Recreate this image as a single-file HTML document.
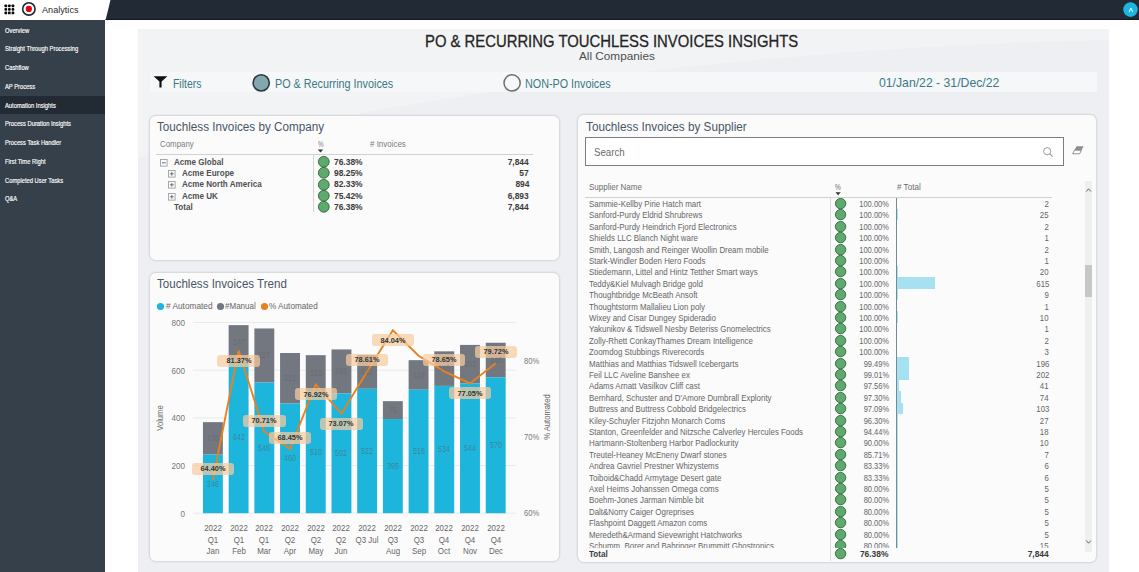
<!DOCTYPE html><html><head><meta charset="utf-8"><title>PO &amp; Recurring Touchless Invoices Insights</title><style>html,body{margin:0;padding:0;width:1139px;height:572px;overflow:hidden;background:#fff;position:relative}.t{position:absolute;white-space:nowrap;font-family:"Liberation Sans",sans-serif}</style></head><body>
<div style="position:absolute;left:0.00px;top:0.00px;width:1139.00px;height:20.00px;background:#ffffff;"></div>
<div style="position:absolute;left:0.00px;top:20.00px;width:105.00px;height:552.00px;background:#36404a;"></div>
<svg style="position:absolute;left:137.5px;top:29px" width="971.5" height="543" viewBox="137.5 29 971.5 543"><rect x="137.5" y="29" width="971.5" height="543" fill="#eeeff2"/><path d="M1110 40.0 L1090 40.4 L1070 40.9 L1050 41.5 L1030 42.2 L1010 43.0 L990 43.9 L970 44.8 L950 45.8 L930 46.9 L910 48.1 L890 49.4 L870 50.7 L850 52.1 L830 53.7 L810 55.3 L790 56.9 L770 58.7 L750 60.6 L730 62.5 L710 64.5 L690 66.6 L670 68.8 L650 71.1 L630 73.4 L610 75.8 L590 78.4 L570 81.0 L550 83.6 L530 86.4 L510 89.2 L490 92.2 L470 95.2 L450 98.3 L430 101.5 L410 104.7 L390 108.1 L370 111.5 L350 115.0 L330 118.6 L310 122.3 L290 126.1 L270 129.9 L250 133.8 L230 137.9 L210 142.0 L190 146.1 L170 150.4 L150 154.7 L137 157.6 L137 29 L1110 29 Z" fill="#f2f3f5"/></svg>
<svg style="position:absolute;left:0;top:0" width="1139" height="20"><polygon points="110.5,0 1139,0 1139,20 105.6,20" fill="#212a35"/><rect x="105.6" y="19" width="1034" height="1" fill="#111820"/></svg>
<div style="position:absolute;left:0.00px;top:95.50px;width:105.00px;height:18.50px;background:#222a33;"></div>
<div style="position:absolute;left:150.00px;top:72.00px;width:947.00px;height:20.40px;background:#f6f7f8;"></div>
<div style="position:absolute;left:149.3px;top:114.6px;width:411px;height:146px;box-sizing:border-box;background:#fbfbfc;border:1px solid #d9dadd;box-shadow:0 0 0 0.8px #e5e6e9;border-radius:7px"></div>
<div style="position:absolute;left:149.3px;top:272.4px;width:411px;height:289.2px;box-sizing:border-box;background:#fbfbfc;border:1px solid #d9dadd;box-shadow:0 0 0 0.8px #e5e6e9;border-radius:7px"></div>
<div style="position:absolute;left:577px;top:114.2px;width:520.2px;height:448.8px;box-sizing:border-box;background:#fbfbfc;border:1px solid #d9dadd;box-shadow:0 0 0 0.8px #e5e6e9;border-radius:7px"></div>
<svg style="position:absolute;left:0;top:0" width="40" height="20"><rect x="4.45" y="4.45" width="2.7" height="2.7" rx="0.9" fill="#0a0a0a"/><rect x="4.45" y="8.00" width="2.7" height="2.7" rx="0.9" fill="#0a0a0a"/><rect x="4.45" y="11.60" width="2.7" height="2.7" rx="0.9" fill="#0a0a0a"/><rect x="8.00" y="4.45" width="2.7" height="2.7" rx="0.9" fill="#0a0a0a"/><rect x="8.00" y="8.00" width="2.7" height="2.7" rx="0.9" fill="#0a0a0a"/><rect x="8.00" y="11.60" width="2.7" height="2.7" rx="0.9" fill="#0a0a0a"/><rect x="11.60" y="4.45" width="2.7" height="2.7" rx="0.9" fill="#0a0a0a"/><rect x="11.60" y="8.00" width="2.7" height="2.7" rx="0.9" fill="#0a0a0a"/><rect x="11.60" y="11.60" width="2.7" height="2.7" rx="0.9" fill="#0a0a0a"/><circle cx="28.85" cy="8.95" r="6.2" fill="#fff" stroke="#1d2530" stroke-width="1.6"/><circle cx="28.85" cy="8.95" r="3.1" fill="#e3000f"/></svg>
<svg style="position:absolute;left:1122px;top:0.6px" width="17" height="17"><circle cx="8.5" cy="8.6" r="7.3" fill="#1db6e0"/><path d="M7.1 11.1 L8.9 7.0 L10.7 11.1" fill="none" stroke="#e8f8fd" stroke-width="1"/></svg>
<svg style="position:absolute;left:152px;top:75px" width="18" height="14"><path d="M1.6 1.2 H15.4 L9.6 6.6 V12.6 H7.4 V6.6 Z" fill="#111"/></svg>
<svg style="position:absolute;left:251px;top:72.5px" width="20" height="20"><circle cx="10.2" cy="9.9" r="8.1" fill="#82a8ae" stroke="#2b383d" stroke-width="1.6"/></svg>
<svg style="position:absolute;left:501.5px;top:72.5px" width="20" height="20"><circle cx="10.1" cy="9.9" r="8.1" fill="none" stroke="#6e6e6e" stroke-width="1.5"/></svg>
<div style="position:absolute;left:156.40px;top:153.80px;width:376.40px;height:1.00px;background:#cfd1d3;"></div>
<div style="position:absolute;left:313.30px;top:155.00px;width:1.00px;height:57.00px;background:#d4d4d4;"></div>
<div style="position:absolute;left:585.2px;top:137.4px;width:478.4px;height:28.4px;box-sizing:border-box;background:#fff;border:1.4px solid #7d7d7d"></div>
<div style="position:absolute;left:585.40px;top:196.80px;width:467.10px;height:1.00px;background:#cfd1d3;"></div>
<div style="position:absolute;left:830.30px;top:197.50px;width:1.00px;height:363.00px;background:#dadada;"></div>
<div style="position:absolute;left:1085.20px;top:180.50px;width:6.90px;height:371.10px;background:#efefef;"></div>
<svg style="position:absolute;left:317px;top:149px" width="8" height="4"><path d="M0.8 0.4 H6.2 L3.5 3.4 Z" fill="#333"/></svg>
<svg style="position:absolute;left:316.80px;top:154.90px" width="13.60" height="13.60"><circle cx="6.80" cy="6.80" r="5.40" fill="#5ea96d" stroke="#2f6339" stroke-width="0.9"/></svg>
<svg style="position:absolute;left:160.30px;top:158.70px" width="8" height="8"><rect x="0.5" y="0.5" width="6.6" height="6.6" fill="none" stroke="#a0a0a0" stroke-width="0.9"/><path d="M1.9 3.8 H5.7" stroke="#707070" stroke-width="1"/></svg>
<svg style="position:absolute;left:316.80px;top:166.25px" width="13.60" height="13.60"><circle cx="6.80" cy="6.80" r="5.40" fill="#5ea96d" stroke="#2f6339" stroke-width="0.9"/></svg>
<svg style="position:absolute;left:168.00px;top:170.05px" width="8" height="8"><rect x="0.5" y="0.5" width="6.6" height="6.6" fill="none" stroke="#a0a0a0" stroke-width="0.9"/><path d="M1.9 3.8 H5.7" stroke="#707070" stroke-width="1"/><path d="M3.8 1.9 V5.7" stroke="#707070" stroke-width="1"/></svg>
<svg style="position:absolute;left:316.80px;top:177.60px" width="13.60" height="13.60"><circle cx="6.80" cy="6.80" r="5.40" fill="#5ea96d" stroke="#2f6339" stroke-width="0.9"/></svg>
<svg style="position:absolute;left:168.00px;top:181.40px" width="8" height="8"><rect x="0.5" y="0.5" width="6.6" height="6.6" fill="none" stroke="#a0a0a0" stroke-width="0.9"/><path d="M1.9 3.8 H5.7" stroke="#707070" stroke-width="1"/><path d="M3.8 1.9 V5.7" stroke="#707070" stroke-width="1"/></svg>
<svg style="position:absolute;left:316.80px;top:188.95px" width="13.60" height="13.60"><circle cx="6.80" cy="6.80" r="5.40" fill="#5ea96d" stroke="#2f6339" stroke-width="0.9"/></svg>
<svg style="position:absolute;left:168.00px;top:192.75px" width="8" height="8"><rect x="0.5" y="0.5" width="6.6" height="6.6" fill="none" stroke="#a0a0a0" stroke-width="0.9"/><path d="M1.9 3.8 H5.7" stroke="#707070" stroke-width="1"/><path d="M3.8 1.9 V5.7" stroke="#707070" stroke-width="1"/></svg>
<svg style="position:absolute;left:316.80px;top:200.30px" width="13.60" height="13.60"><circle cx="6.80" cy="6.80" r="5.40" fill="#5ea96d" stroke="#2f6339" stroke-width="0.9"/></svg>
<svg style="position:absolute;left:156.0px;top:301.5px" width="9" height="9"><circle cx="4.5" cy="4.5" r="3.6" fill="#1eb5dd"/></svg>
<svg style="position:absolute;left:216.0px;top:301.5px" width="9" height="9"><circle cx="4.5" cy="4.5" r="3.6" fill="#727780"/></svg>
<svg style="position:absolute;left:260.0px;top:301.5px" width="9" height="9"><circle cx="4.5" cy="4.5" r="3.6" fill="#e9811f"/></svg>
<svg style="position:absolute;left:0;top:0" width="1139" height="572"><rect x="193" y="512.70" width="323" height="1" fill="#e9eaeb"/><rect x="193" y="465.03" width="323" height="1" fill="#e9eaeb"/><rect x="193" y="417.35" width="323" height="1" fill="#e9eaeb"/><rect x="193" y="369.68" width="323" height="1" fill="#e9eaeb"/><rect x="193" y="322.00" width="323" height="1" fill="#e9eaeb"/><rect x="202.95" y="422.14" width="19.9" height="32.42" fill="#727780"/><rect x="202.95" y="454.56" width="19.9" height="58.64" fill="#1eb5dd"/><rect x="228.66" y="325.12" width="19.9" height="35.04" fill="#727780"/><rect x="228.66" y="360.16" width="19.9" height="153.04" fill="#1eb5dd"/><rect x="254.37" y="328.46" width="19.9" height="54.11" fill="#727780"/><rect x="254.37" y="382.57" width="19.9" height="130.63" fill="#1eb5dd"/><rect x="280.08" y="353.01" width="19.9" height="50.54" fill="#727780"/><rect x="280.08" y="403.55" width="19.9" height="109.65" fill="#1eb5dd"/><rect x="305.79" y="355.16" width="19.9" height="36.47" fill="#727780"/><rect x="305.79" y="391.63" width="19.9" height="121.57" fill="#1eb5dd"/><rect x="331.50" y="349.44" width="19.9" height="44.10" fill="#727780"/><rect x="331.50" y="393.54" width="19.9" height="119.66" fill="#1eb5dd"/><rect x="357.20" y="354.92" width="19.9" height="33.85" fill="#727780"/><rect x="357.20" y="388.77" width="19.9" height="124.43" fill="#1eb5dd"/><rect x="382.91" y="401.16" width="19.9" height="17.88" fill="#727780"/><rect x="382.91" y="419.04" width="19.9" height="94.16" fill="#1eb5dd"/><rect x="408.62" y="360.16" width="19.9" height="29.56" fill="#727780"/><rect x="408.62" y="389.72" width="19.9" height="123.48" fill="#1eb5dd"/><rect x="434.33" y="351.34" width="19.9" height="34.56" fill="#727780"/><rect x="434.33" y="385.91" width="19.9" height="127.29" fill="#1eb5dd"/><rect x="460.04" y="344.91" width="19.9" height="38.62" fill="#727780"/><rect x="460.04" y="383.52" width="19.9" height="129.68" fill="#1eb5dd"/><rect x="485.75" y="342.76" width="19.9" height="34.56" fill="#727780"/><rect x="485.75" y="377.33" width="19.9" height="135.87" fill="#1eb5dd"/><polyline points="212.90,479.73 238.61,350.58 264.32,431.70 290.03,448.88 315.74,384.42 341.45,413.73 367.15,371.54 392.86,330.24 418.57,355.78 444.28,371.31 469.99,383.42 495.70,363.13" fill="none" stroke="#e9811f" stroke-width="1.9" stroke-linejoin="miter"/></svg>
<svg style="position:absolute;left:1042px;top:146px" width="12" height="12"><circle cx="5.2" cy="5.2" r="3.6" fill="none" stroke="#9a9a9a" stroke-width="1"/><path d="M7.8 7.8 L10.6 10.6" stroke="#9a9a9a" stroke-width="1.1"/></svg>
<svg style="position:absolute;left:1071px;top:145px" width="14" height="11"><path d="M5.5 1.2 H12.6 L8.6 8.8 H1.6 Z" fill="#8e8e8e"/><path d="M3.5 5.2 H10.4 L8.6 8.8 H1.6 Z" fill="#fff" stroke="#8e8e8e" stroke-width="0.9"/></svg>
<svg style="position:absolute;left:834.5px;top:192px" width="8" height="4"><path d="M0.5 0.3 H5.7 L3.1 3.3 Z" fill="#333"/></svg>
<svg style="position:absolute;left:833.90px;top:547.00px" width="13.20" height="13.20"><circle cx="6.60" cy="6.60" r="5.20" fill="#5ea96d" stroke="#2f6339" stroke-width="0.9"/></svg>
<div style="position:absolute;left:1085.40px;top:264.50px;width:6.50px;height:32.80px;background:#c7c7c7;"></div>
<div style="position:absolute;left:191.70px;top:462.73px;width:42.4px;height:12px;border-radius:3px;background:rgba(246,204,160,0.72)"></div>
<div style="position:absolute;left:217.41px;top:354.58px;width:42.4px;height:12px;border-radius:3px;background:rgba(246,204,160,0.72)"></div>
<div style="position:absolute;left:243.12px;top:414.70px;width:42.4px;height:12px;border-radius:3px;background:rgba(246,204,160,0.72)"></div>
<div style="position:absolute;left:268.83px;top:431.88px;width:42.4px;height:12px;border-radius:3px;background:rgba(246,204,160,0.72)"></div>
<div style="position:absolute;left:294.54px;top:388.42px;width:42.4px;height:12px;border-radius:3px;background:rgba(246,204,160,0.72)"></div>
<div style="position:absolute;left:320.25px;top:417.73px;width:42.4px;height:12px;border-radius:3px;background:rgba(246,204,160,0.72)"></div>
<div style="position:absolute;left:345.95px;top:354.04px;width:42.4px;height:12px;border-radius:3px;background:rgba(246,204,160,0.72)"></div>
<div style="position:absolute;left:371.66px;top:334.24px;width:42.4px;height:12px;border-radius:3px;background:rgba(246,204,160,0.72)"></div>
<div style="position:absolute;left:423.08px;top:353.81px;width:42.4px;height:12px;border-radius:3px;background:rgba(246,204,160,0.72)"></div>
<div style="position:absolute;left:448.79px;top:387.42px;width:42.4px;height:12px;border-radius:3px;background:rgba(246,204,160,0.72)"></div>
<div style="position:absolute;left:474.50px;top:345.63px;width:42.4px;height:12px;border-radius:3px;background:rgba(246,204,160,0.72)"></div>
<svg style="position:absolute;left:1085px;top:186.5px" width="8" height="6"><path d="M1.3 4.5 L3.6 1.8 L5.9 4.5" fill="none" stroke="#555" stroke-width="0.9"/></svg>
<svg style="position:absolute;left:1085px;top:539px" width="8" height="6"><path d="M1.3 1.5 L3.6 4.2 L5.9 1.5" fill="none" stroke="#555" stroke-width="0.9"/></svg>
<div class="t" style="left:12.90px;width:400px;text-align:center;top:479.70px;font-size:8.5px;line-height:8.5px;color:rgba(85,85,85,0.5);transform:scaleX(0.8400);transform-origin:center center;">246</div>
<div class="t" style="left:12.90px;width:400px;text-align:center;top:434.17px;font-size:8.5px;line-height:8.5px;color:rgba(85,85,85,0.3);transform:scaleX(0.8400);transform-origin:center center;">136</div>
<div class="t" style="left:38.61px;width:400px;text-align:center;top:432.50px;font-size:8.5px;line-height:8.5px;color:rgba(85,85,85,0.5);transform:scaleX(0.8400);transform-origin:center center;">642</div>
<div class="t" style="left:38.61px;width:400px;text-align:center;top:338.46px;font-size:8.5px;line-height:8.5px;color:rgba(85,85,85,0.3);transform:scaleX(0.8400);transform-origin:center center;">147</div>
<div class="t" style="left:64.32px;width:400px;text-align:center;top:443.70px;font-size:8.5px;line-height:8.5px;color:rgba(85,85,85,0.5);transform:scaleX(0.8400);transform-origin:center center;">548</div>
<div class="t" style="left:64.32px;width:400px;text-align:center;top:351.33px;font-size:8.5px;line-height:8.5px;color:rgba(85,85,85,0.3);transform:scaleX(0.8400);transform-origin:center center;">227</div>
<div class="t" style="left:90.03px;width:400px;text-align:center;top:454.19px;font-size:8.5px;line-height:8.5px;color:rgba(85,85,85,0.5);transform:scaleX(0.8400);transform-origin:center center;">460</div>
<div class="t" style="left:90.03px;width:400px;text-align:center;top:374.10px;font-size:8.5px;line-height:8.5px;color:rgba(85,85,85,0.3);transform:scaleX(0.8400);transform-origin:center center;">212</div>
<div class="t" style="left:115.74px;width:400px;text-align:center;top:448.23px;font-size:8.5px;line-height:8.5px;color:rgba(85,85,85,0.5);transform:scaleX(0.8400);transform-origin:center center;">510</div>
<div class="t" style="left:115.74px;width:400px;text-align:center;top:369.21px;font-size:8.5px;line-height:8.5px;color:rgba(85,85,85,0.3);transform:scaleX(0.8400);transform-origin:center center;">153</div>
<div class="t" style="left:141.45px;width:400px;text-align:center;top:449.19px;font-size:8.5px;line-height:8.5px;color:rgba(85,85,85,0.5);transform:scaleX(0.8400);transform-origin:center center;">502</div>
<div class="t" style="left:141.45px;width:400px;text-align:center;top:367.30px;font-size:8.5px;line-height:8.5px;color:rgba(85,85,85,0.3);transform:scaleX(0.8400);transform-origin:center center;">185</div>
<div class="t" style="left:167.15px;width:400px;text-align:center;top:446.80px;font-size:8.5px;line-height:8.5px;color:rgba(85,85,85,0.5);transform:scaleX(0.8400);transform-origin:center center;">522</div>
<div class="t" style="left:167.15px;width:400px;text-align:center;top:367.66px;font-size:8.5px;line-height:8.5px;color:rgba(85,85,85,0.3);transform:scaleX(0.8400);transform-origin:center center;">142</div>
<div class="t" style="left:192.86px;width:400px;text-align:center;top:461.94px;font-size:8.5px;line-height:8.5px;color:rgba(85,85,85,0.5);transform:scaleX(0.8400);transform-origin:center center;">395</div>
<div class="t" style="left:192.86px;width:400px;text-align:center;top:405.92px;font-size:8.5px;line-height:8.5px;color:rgba(85,85,85,0.3);transform:scaleX(0.8400);transform-origin:center center;">75</div>
<div class="t" style="left:218.57px;width:400px;text-align:center;top:447.28px;font-size:8.5px;line-height:8.5px;color:rgba(85,85,85,0.5);transform:scaleX(0.8400);transform-origin:center center;">518</div>
<div class="t" style="left:218.57px;width:400px;text-align:center;top:370.76px;font-size:8.5px;line-height:8.5px;color:rgba(85,85,85,0.3);transform:scaleX(0.8400);transform-origin:center center;">124</div>
<div class="t" style="left:244.28px;width:400px;text-align:center;top:445.37px;font-size:8.5px;line-height:8.5px;color:rgba(85,85,85,0.5);transform:scaleX(0.8400);transform-origin:center center;">534</div>
<div class="t" style="left:244.28px;width:400px;text-align:center;top:364.44px;font-size:8.5px;line-height:8.5px;color:rgba(85,85,85,0.3);transform:scaleX(0.8400);transform-origin:center center;">145</div>
<div class="t" style="left:269.99px;width:400px;text-align:center;top:444.18px;font-size:8.5px;line-height:8.5px;color:rgba(85,85,85,0.5);transform:scaleX(0.8400);transform-origin:center center;">544</div>
<div class="t" style="left:269.99px;width:400px;text-align:center;top:360.03px;font-size:8.5px;line-height:8.5px;color:rgba(85,85,85,0.3);transform:scaleX(0.8400);transform-origin:center center;">162</div>
<div class="t" style="left:295.70px;width:400px;text-align:center;top:441.08px;font-size:8.5px;line-height:8.5px;color:rgba(85,85,85,0.5);transform:scaleX(0.8400);transform-origin:center center;">570</div>
<div class="t" style="left:295.70px;width:400px;text-align:center;top:355.86px;font-size:8.5px;line-height:8.5px;color:rgba(85,85,85,0.3);transform:scaleX(0.8400);transform-origin:center center;">145</div>
<div style="position:absolute;left:139.5px;top:412px;width:40px;height:12px;line-height:12px;text-align:center;font-family:'Liberation Sans', sans-serif;font-size:8.5px;color:#666;transform:rotate(-90deg) scaleX(0.9)">Volume</div>
<div style="position:absolute;left:517.2px;top:411px;width:60px;height:12px;line-height:12px;text-align:center;font-family:'Liberation Sans', sans-serif;font-size:8.5px;color:#666;transform:rotate(-90deg) scaleX(0.9)">% Automated</div>
<div class="t" style="left:41.80px;top:4.87px;font-size:9.5px;line-height:9.5px;color:#2a2a2a;transform:scaleX(0.9601);transform-origin:left center;">Analytics</div>
<div class="t" style="left:5.30px;top:27.51px;font-size:6.5px;line-height:6.5px;color:#ffffff;transform:scaleX(0.8900);transform-origin:left center;-webkit-text-stroke:0.15px #fff;">Overview</div>
<div class="t" style="left:5.30px;top:46.26px;font-size:6.5px;line-height:6.5px;color:#ffffff;transform:scaleX(0.8900);transform-origin:left center;-webkit-text-stroke:0.15px #fff;">Straight Through Processing</div>
<div class="t" style="left:5.30px;top:65.01px;font-size:6.5px;line-height:6.5px;color:#ffffff;transform:scaleX(0.8900);transform-origin:left center;-webkit-text-stroke:0.15px #fff;">Cashflow</div>
<div class="t" style="left:5.30px;top:83.76px;font-size:6.5px;line-height:6.5px;color:#ffffff;transform:scaleX(0.8900);transform-origin:left center;-webkit-text-stroke:0.15px #fff;">AP Process</div>
<div class="t" style="left:5.30px;top:102.51px;font-size:6.5px;line-height:6.5px;color:#ffffff;transform:scaleX(0.8900);transform-origin:left center;-webkit-text-stroke:0.15px #fff;">Automation Insights</div>
<div class="t" style="left:5.30px;top:121.26px;font-size:6.5px;line-height:6.5px;color:#ffffff;transform:scaleX(0.8900);transform-origin:left center;-webkit-text-stroke:0.15px #fff;">Process Duration Insights</div>
<div class="t" style="left:5.30px;top:140.01px;font-size:6.5px;line-height:6.5px;color:#ffffff;transform:scaleX(0.8900);transform-origin:left center;-webkit-text-stroke:0.15px #fff;">Process Task Handler</div>
<div class="t" style="left:5.30px;top:158.76px;font-size:6.5px;line-height:6.5px;color:#ffffff;transform:scaleX(0.8900);transform-origin:left center;-webkit-text-stroke:0.15px #fff;">First Time Right</div>
<div class="t" style="left:5.30px;top:177.51px;font-size:6.5px;line-height:6.5px;color:#ffffff;transform:scaleX(0.8900);transform-origin:left center;-webkit-text-stroke:0.15px #fff;">Completed User Tasks</div>
<div class="t" style="left:5.30px;top:196.26px;font-size:6.5px;line-height:6.5px;color:#ffffff;transform:scaleX(0.8900);transform-origin:left center;-webkit-text-stroke:0.15px #fff;">Q&amp;A</div>
<div class="t" style="left:425.00px;top:32.53px;font-size:17px;line-height:17px;color:#252423;transform:scaleX(0.8734);transform-origin:left center;-webkit-text-stroke:0.3px #252423;">PO &amp; RECURRING TOUCHLESS INVOICES INSIGHTS</div>
<div class="t" style="left:579.20px;top:51.05px;font-size:11.3px;line-height:11.3px;color:#4d4d4d;transform:scaleX(1.0406);transform-origin:left center;">All Companies</div>
<div class="t" style="left:172.60px;top:77.86px;font-size:12px;line-height:12px;color:#3b7787;transform:scaleX(0.8692);transform-origin:left center;">Filters</div>
<div class="t" style="left:274.80px;top:77.86px;font-size:12px;line-height:12px;color:#3b7787;transform:scaleX(0.8996);transform-origin:left center;">PO &amp; Recurring Invoices</div>
<div class="t" style="left:525.40px;top:77.86px;font-size:12px;line-height:12px;color:#3b7787;transform:scaleX(0.8977);transform-origin:left center;">NON-PO Invoices</div>
<div class="t" style="left:878.70px;top:75.92px;font-size:13px;line-height:13px;color:#3b7787;transform:scaleX(0.9404);transform-origin:left center;">01/Jan/22 - 31/Dec/22</div>
<div class="t" style="left:157.40px;top:121.24px;font-size:12.5px;line-height:12.5px;color:#4a5563;transform:scaleX(0.9358);transform-origin:left center;">Touchless Invoices by Company</div>
<div class="t" style="left:160.30px;top:139.83px;font-size:8.6px;line-height:8.6px;color:#7b7b7b;transform:scaleX(0.9189);transform-origin:left center;">Company</div>
<div class="t" style="left:317.80px;top:139.83px;font-size:8.6px;line-height:8.6px;color:#7b7b7b;transform:scaleX(0.7314);transform-origin:left center;">%</div>
<div class="t" style="left:369.70px;top:139.93px;font-size:8.6px;line-height:8.6px;color:#7b7b7b;transform:scaleX(0.9250);transform-origin:left center;"># Invoices</div>
<div class="t" style="left:174.00px;top:157.65px;font-size:8.7px;line-height:8.7px;color:#505050;font-weight:700;transform:scaleX(0.9300);transform-origin:left center;">Acme Global</div>
<div class="t" style="left:334.10px;top:157.65px;font-size:8.7px;line-height:8.7px;color:#3a3a3a;font-weight:700;transform:scaleX(0.9700);transform-origin:left center;">76.38%</div>
<div class="t" style="right:610.00px;top:157.65px;font-size:8.7px;line-height:8.7px;color:#3a3a3a;font-weight:700;transform:scaleX(0.9700);transform-origin:right center;">7,844</div>
<div class="t" style="left:181.60px;top:169.00px;font-size:8.7px;line-height:8.7px;color:#505050;font-weight:700;transform:scaleX(0.9300);transform-origin:left center;">Acme Europe</div>
<div class="t" style="left:334.10px;top:169.00px;font-size:8.7px;line-height:8.7px;color:#3a3a3a;font-weight:700;transform:scaleX(0.9700);transform-origin:left center;">98.25%</div>
<div class="t" style="right:610.00px;top:169.00px;font-size:8.7px;line-height:8.7px;color:#3a3a3a;font-weight:700;transform:scaleX(0.9700);transform-origin:right center;">57</div>
<div class="t" style="left:181.60px;top:180.35px;font-size:8.7px;line-height:8.7px;color:#505050;font-weight:700;transform:scaleX(0.9300);transform-origin:left center;">Acme North America</div>
<div class="t" style="left:334.10px;top:180.35px;font-size:8.7px;line-height:8.7px;color:#3a3a3a;font-weight:700;transform:scaleX(0.9700);transform-origin:left center;">82.33%</div>
<div class="t" style="right:610.00px;top:180.35px;font-size:8.7px;line-height:8.7px;color:#3a3a3a;font-weight:700;transform:scaleX(0.9700);transform-origin:right center;">894</div>
<div class="t" style="left:181.60px;top:191.70px;font-size:8.7px;line-height:8.7px;color:#505050;font-weight:700;transform:scaleX(0.9300);transform-origin:left center;">Acme UK</div>
<div class="t" style="left:334.10px;top:191.70px;font-size:8.7px;line-height:8.7px;color:#3a3a3a;font-weight:700;transform:scaleX(0.9700);transform-origin:left center;">75.42%</div>
<div class="t" style="right:610.00px;top:191.70px;font-size:8.7px;line-height:8.7px;color:#3a3a3a;font-weight:700;transform:scaleX(0.9700);transform-origin:right center;">6,893</div>
<div class="t" style="left:174.00px;top:203.05px;font-size:8.7px;line-height:8.7px;color:#505050;font-weight:700;transform:scaleX(0.9300);transform-origin:left center;">Total</div>
<div class="t" style="left:334.10px;top:203.05px;font-size:8.7px;line-height:8.7px;color:#3a3a3a;font-weight:700;transform:scaleX(0.9700);transform-origin:left center;">76.38%</div>
<div class="t" style="right:610.00px;top:203.05px;font-size:8.7px;line-height:8.7px;color:#3a3a3a;font-weight:700;transform:scaleX(0.9700);transform-origin:right center;">7,844</div>
<div class="t" style="left:157.00px;top:278.34px;font-size:12.5px;line-height:12.5px;color:#4a5563;transform:scaleX(0.9255);transform-origin:left center;">Touchless Invoices Trend</div>
<div class="t" style="left:165.70px;top:301.59px;font-size:9px;line-height:9px;color:#666666;transform:scaleX(0.9219);transform-origin:left center;"># Automated</div>
<div class="t" style="left:225.40px;top:301.59px;font-size:9px;line-height:9px;color:#666666;transform:scaleX(0.8919);transform-origin:left center;">#Manual</div>
<div class="t" style="left:269.30px;top:301.59px;font-size:9px;line-height:9px;color:#666666;transform:scaleX(0.9095);transform-origin:left center;">% Automated</div>
<div class="t" style="right:953.70px;top:509.60px;font-size:9px;line-height:9px;color:#777777;transform:scaleX(0.9000);transform-origin:right center;">0</div>
<div class="t" style="right:953.70px;top:461.92px;font-size:9px;line-height:9px;color:#777777;transform:scaleX(0.9000);transform-origin:right center;">200</div>
<div class="t" style="right:953.70px;top:414.25px;font-size:9px;line-height:9px;color:#777777;transform:scaleX(0.9000);transform-origin:right center;">400</div>
<div class="t" style="right:953.70px;top:366.57px;font-size:9px;line-height:9px;color:#777777;transform:scaleX(0.9000);transform-origin:right center;">600</div>
<div class="t" style="right:953.70px;top:318.89px;font-size:9px;line-height:9px;color:#777777;transform:scaleX(0.9000);transform-origin:right center;">800</div>
<div class="t" style="left:524.00px;top:509.20px;font-size:9px;line-height:9px;color:#777777;transform:scaleX(0.8437);transform-origin:left center;">60%</div>
<div class="t" style="left:524.00px;top:433.10px;font-size:9px;line-height:9px;color:#777777;transform:scaleX(0.8437);transform-origin:left center;">70%</div>
<div class="t" style="left:524.00px;top:357.00px;font-size:9px;line-height:9px;color:#777777;transform:scaleX(0.8437);transform-origin:left center;">80%</div>
<div class="t" style="left:12.90px;width:400px;text-align:center;top:524.00px;font-size:9px;line-height:9px;color:#666666;transform:scaleX(0.8800);transform-origin:center center;">2022</div>
<div class="t" style="left:12.90px;width:400px;text-align:center;top:535.60px;font-size:9px;line-height:9px;color:#666666;transform:scaleX(0.8800);transform-origin:center center;">Q1</div>
<div class="t" style="left:12.90px;width:400px;text-align:center;top:546.69px;font-size:9px;line-height:9px;color:#666666;transform:scaleX(0.8800);transform-origin:center center;">Jan</div>
<div class="t" style="left:38.61px;width:400px;text-align:center;top:524.00px;font-size:9px;line-height:9px;color:#666666;transform:scaleX(0.8800);transform-origin:center center;">2022</div>
<div class="t" style="left:38.61px;width:400px;text-align:center;top:535.60px;font-size:9px;line-height:9px;color:#666666;transform:scaleX(0.8800);transform-origin:center center;">Q1</div>
<div class="t" style="left:38.61px;width:400px;text-align:center;top:546.69px;font-size:9px;line-height:9px;color:#666666;transform:scaleX(0.8800);transform-origin:center center;">Feb</div>
<div class="t" style="left:64.32px;width:400px;text-align:center;top:524.00px;font-size:9px;line-height:9px;color:#666666;transform:scaleX(0.8800);transform-origin:center center;">2022</div>
<div class="t" style="left:64.32px;width:400px;text-align:center;top:535.60px;font-size:9px;line-height:9px;color:#666666;transform:scaleX(0.8800);transform-origin:center center;">Q1</div>
<div class="t" style="left:64.32px;width:400px;text-align:center;top:546.69px;font-size:9px;line-height:9px;color:#666666;transform:scaleX(0.8800);transform-origin:center center;">Mar</div>
<div class="t" style="left:90.03px;width:400px;text-align:center;top:524.00px;font-size:9px;line-height:9px;color:#666666;transform:scaleX(0.8800);transform-origin:center center;">2022</div>
<div class="t" style="left:90.03px;width:400px;text-align:center;top:535.60px;font-size:9px;line-height:9px;color:#666666;transform:scaleX(0.8800);transform-origin:center center;">Q2</div>
<div class="t" style="left:90.03px;width:400px;text-align:center;top:546.69px;font-size:9px;line-height:9px;color:#666666;transform:scaleX(0.8800);transform-origin:center center;">Apr</div>
<div class="t" style="left:115.74px;width:400px;text-align:center;top:524.00px;font-size:9px;line-height:9px;color:#666666;transform:scaleX(0.8800);transform-origin:center center;">2022</div>
<div class="t" style="left:115.74px;width:400px;text-align:center;top:535.60px;font-size:9px;line-height:9px;color:#666666;transform:scaleX(0.8800);transform-origin:center center;">Q2</div>
<div class="t" style="left:115.74px;width:400px;text-align:center;top:546.69px;font-size:9px;line-height:9px;color:#666666;transform:scaleX(0.8800);transform-origin:center center;">May</div>
<div class="t" style="left:141.45px;width:400px;text-align:center;top:524.00px;font-size:9px;line-height:9px;color:#666666;transform:scaleX(0.8800);transform-origin:center center;">2022</div>
<div class="t" style="left:141.45px;width:400px;text-align:center;top:535.60px;font-size:9px;line-height:9px;color:#666666;transform:scaleX(0.8800);transform-origin:center center;">Q2</div>
<div class="t" style="left:141.45px;width:400px;text-align:center;top:546.69px;font-size:9px;line-height:9px;color:#666666;transform:scaleX(0.8800);transform-origin:center center;">Jun</div>
<div class="t" style="left:167.15px;width:400px;text-align:center;top:524.00px;font-size:9px;line-height:9px;color:#666666;transform:scaleX(0.8800);transform-origin:center center;">2022</div>
<div class="t" style="left:167.15px;width:400px;text-align:center;top:535.60px;font-size:9px;line-height:9px;color:#666666;transform:scaleX(0.8800);transform-origin:center center;">Q3 Jul</div>
<div class="t" style="left:192.86px;width:400px;text-align:center;top:524.00px;font-size:9px;line-height:9px;color:#666666;transform:scaleX(0.8800);transform-origin:center center;">2022</div>
<div class="t" style="left:192.86px;width:400px;text-align:center;top:535.60px;font-size:9px;line-height:9px;color:#666666;transform:scaleX(0.8800);transform-origin:center center;">Q3</div>
<div class="t" style="left:192.86px;width:400px;text-align:center;top:546.69px;font-size:9px;line-height:9px;color:#666666;transform:scaleX(0.8800);transform-origin:center center;">Aug</div>
<div class="t" style="left:218.57px;width:400px;text-align:center;top:524.00px;font-size:9px;line-height:9px;color:#666666;transform:scaleX(0.8800);transform-origin:center center;">2022</div>
<div class="t" style="left:218.57px;width:400px;text-align:center;top:535.60px;font-size:9px;line-height:9px;color:#666666;transform:scaleX(0.8800);transform-origin:center center;">Q3</div>
<div class="t" style="left:218.57px;width:400px;text-align:center;top:546.69px;font-size:9px;line-height:9px;color:#666666;transform:scaleX(0.8800);transform-origin:center center;">Sep</div>
<div class="t" style="left:244.28px;width:400px;text-align:center;top:524.00px;font-size:9px;line-height:9px;color:#666666;transform:scaleX(0.8800);transform-origin:center center;">2022</div>
<div class="t" style="left:244.28px;width:400px;text-align:center;top:535.60px;font-size:9px;line-height:9px;color:#666666;transform:scaleX(0.8800);transform-origin:center center;">Q4</div>
<div class="t" style="left:244.28px;width:400px;text-align:center;top:546.69px;font-size:9px;line-height:9px;color:#666666;transform:scaleX(0.8800);transform-origin:center center;">Oct</div>
<div class="t" style="left:269.99px;width:400px;text-align:center;top:524.00px;font-size:9px;line-height:9px;color:#666666;transform:scaleX(0.8800);transform-origin:center center;">2022</div>
<div class="t" style="left:269.99px;width:400px;text-align:center;top:535.60px;font-size:9px;line-height:9px;color:#666666;transform:scaleX(0.8800);transform-origin:center center;">Q4</div>
<div class="t" style="left:269.99px;width:400px;text-align:center;top:546.69px;font-size:9px;line-height:9px;color:#666666;transform:scaleX(0.8800);transform-origin:center center;">Nov</div>
<div class="t" style="left:295.70px;width:400px;text-align:center;top:524.00px;font-size:9px;line-height:9px;color:#666666;transform:scaleX(0.8800);transform-origin:center center;">2022</div>
<div class="t" style="left:295.70px;width:400px;text-align:center;top:535.60px;font-size:9px;line-height:9px;color:#666666;transform:scaleX(0.8800);transform-origin:center center;">Q4</div>
<div class="t" style="left:295.70px;width:400px;text-align:center;top:546.69px;font-size:9px;line-height:9px;color:#666666;transform:scaleX(0.8800);transform-origin:center center;">Dec</div>
<div class="t" style="left:12.90px;width:400px;text-align:center;top:465.03px;font-size:7.7px;line-height:7.7px;color:#333333;font-weight:700;transform:scaleX(0.9587);transform-origin:center center;">64.40%</div>
<div class="t" style="left:38.61px;width:400px;text-align:center;top:356.88px;font-size:7.7px;line-height:7.7px;color:#333333;font-weight:700;transform:scaleX(0.9587);transform-origin:center center;">81.37%</div>
<div class="t" style="left:64.32px;width:400px;text-align:center;top:416.99px;font-size:7.7px;line-height:7.7px;color:#333333;font-weight:700;transform:scaleX(0.9587);transform-origin:center center;">70.71%</div>
<div class="t" style="left:90.03px;width:400px;text-align:center;top:434.17px;font-size:7.7px;line-height:7.7px;color:#333333;font-weight:700;transform:scaleX(0.9587);transform-origin:center center;">68.45%</div>
<div class="t" style="left:115.74px;width:400px;text-align:center;top:390.71px;font-size:7.7px;line-height:7.7px;color:#333333;font-weight:700;transform:scaleX(0.9587);transform-origin:center center;">76.92%</div>
<div class="t" style="left:141.45px;width:400px;text-align:center;top:420.02px;font-size:7.7px;line-height:7.7px;color:#333333;font-weight:700;transform:scaleX(0.9587);transform-origin:center center;">73.07%</div>
<div class="t" style="left:167.15px;width:400px;text-align:center;top:356.34px;font-size:7.7px;line-height:7.7px;color:#333333;font-weight:700;transform:scaleX(0.9587);transform-origin:center center;">78.61%</div>
<div class="t" style="left:192.86px;width:400px;text-align:center;top:336.53px;font-size:7.7px;line-height:7.7px;color:#333333;font-weight:700;transform:scaleX(0.9587);transform-origin:center center;">84.04%</div>
<div class="t" style="left:244.28px;width:400px;text-align:center;top:356.10px;font-size:7.7px;line-height:7.7px;color:#333333;font-weight:700;transform:scaleX(0.9587);transform-origin:center center;">78.65%</div>
<div class="t" style="left:269.99px;width:400px;text-align:center;top:389.71px;font-size:7.7px;line-height:7.7px;color:#333333;font-weight:700;transform:scaleX(0.9587);transform-origin:center center;">77.05%</div>
<div class="t" style="left:295.70px;width:400px;text-align:center;top:347.92px;font-size:7.7px;line-height:7.7px;color:#333333;font-weight:700;transform:scaleX(0.9587);transform-origin:center center;">79.72%</div>
<div class="t" style="left:585.80px;top:120.54px;font-size:12.5px;line-height:12.5px;color:#4a5563;transform:scaleX(0.9401);transform-origin:left center;">Touchless Invoices by Supplier</div>
<div class="t" style="left:593.70px;top:147.21px;font-size:11px;line-height:11px;color:#6b6b6b;transform:scaleX(0.8807);transform-origin:left center;">Search</div>
<div class="t" style="left:588.80px;top:182.93px;font-size:8.6px;line-height:8.6px;color:#6b6b6b;transform:scaleX(0.9306);transform-origin:left center;">Supplier Name</div>
<div class="t" style="left:835.00px;top:182.93px;font-size:8.6px;line-height:8.6px;color:#6b6b6b;transform:scaleX(0.7576);transform-origin:left center;">%</div>
<div class="t" style="left:896.70px;top:182.93px;font-size:8.6px;line-height:8.6px;color:#6b6b6b;transform:scaleX(0.9415);transform-origin:left center;"># Total</div>
<div class="t" style="left:589.00px;top:549.65px;font-size:8.7px;line-height:8.7px;color:#3a3a3a;font-weight:700;transform:scaleX(0.9300);transform-origin:left center;">Total</div>
<div class="t" style="right:250.20px;top:549.65px;font-size:8.7px;line-height:8.7px;color:#3a3a3a;font-weight:700;transform:scaleX(0.9700);transform-origin:right center;">76.38%</div>
<div class="t" style="right:90.40px;top:549.65px;font-size:8.7px;line-height:8.7px;color:#3a3a3a;font-weight:700;transform:scaleX(0.9700);transform-origin:right center;">7,844</div>
<div style="position:absolute;left:0;top:197.8px;width:1139px;height:350.20px;overflow:hidden"><div style="position:absolute;left:0;top:-197.8px;width:1139px;height:572px">
<svg style="position:absolute;left:833.90px;top:197.00px" width="13.20" height="13.20"><circle cx="6.60" cy="6.60" r="5.20" fill="#5ea96d" stroke="#2f6339" stroke-width="0.9"/></svg>
<svg style="position:absolute;left:833.90px;top:208.40px" width="13.20" height="13.20"><circle cx="6.60" cy="6.60" r="5.20" fill="#5ea96d" stroke="#2f6339" stroke-width="0.9"/></svg>
<div style="position:absolute;left:896.60px;top:208.80px;width:1.54px;height:11.50px;background:#a5e1f1;"></div>
<svg style="position:absolute;left:833.90px;top:219.80px" width="13.20" height="13.20"><circle cx="6.60" cy="6.60" r="5.20" fill="#5ea96d" stroke="#2f6339" stroke-width="0.9"/></svg>
<svg style="position:absolute;left:833.90px;top:231.20px" width="13.20" height="13.20"><circle cx="6.60" cy="6.60" r="5.20" fill="#5ea96d" stroke="#2f6339" stroke-width="0.9"/></svg>
<svg style="position:absolute;left:833.90px;top:242.60px" width="13.20" height="13.20"><circle cx="6.60" cy="6.60" r="5.20" fill="#5ea96d" stroke="#2f6339" stroke-width="0.9"/></svg>
<svg style="position:absolute;left:833.90px;top:254.00px" width="13.20" height="13.20"><circle cx="6.60" cy="6.60" r="5.20" fill="#5ea96d" stroke="#2f6339" stroke-width="0.9"/></svg>
<svg style="position:absolute;left:833.90px;top:265.40px" width="13.20" height="13.20"><circle cx="6.60" cy="6.60" r="5.20" fill="#5ea96d" stroke="#2f6339" stroke-width="0.9"/></svg>
<div style="position:absolute;left:896.60px;top:265.80px;width:1.24px;height:11.50px;background:#a5e1f1;"></div>
<svg style="position:absolute;left:833.90px;top:276.80px" width="13.20" height="13.20"><circle cx="6.60" cy="6.60" r="5.20" fill="#5ea96d" stroke="#2f6339" stroke-width="0.9"/></svg>
<div style="position:absolute;left:896.60px;top:277.20px;width:38.00px;height:11.50px;background:#a5e1f1;"></div>
<svg style="position:absolute;left:833.90px;top:288.20px" width="13.20" height="13.20"><circle cx="6.60" cy="6.60" r="5.20" fill="#5ea96d" stroke="#2f6339" stroke-width="0.9"/></svg>
<div style="position:absolute;left:896.60px;top:288.60px;width:0.56px;height:11.50px;background:#a5e1f1;"></div>
<svg style="position:absolute;left:833.90px;top:299.60px" width="13.20" height="13.20"><circle cx="6.60" cy="6.60" r="5.20" fill="#5ea96d" stroke="#2f6339" stroke-width="0.9"/></svg>
<svg style="position:absolute;left:833.90px;top:311.00px" width="13.20" height="13.20"><circle cx="6.60" cy="6.60" r="5.20" fill="#5ea96d" stroke="#2f6339" stroke-width="0.9"/></svg>
<div style="position:absolute;left:896.60px;top:311.40px;width:0.62px;height:11.50px;background:#a5e1f1;"></div>
<svg style="position:absolute;left:833.90px;top:322.40px" width="13.20" height="13.20"><circle cx="6.60" cy="6.60" r="5.20" fill="#5ea96d" stroke="#2f6339" stroke-width="0.9"/></svg>
<svg style="position:absolute;left:833.90px;top:333.80px" width="13.20" height="13.20"><circle cx="6.60" cy="6.60" r="5.20" fill="#5ea96d" stroke="#2f6339" stroke-width="0.9"/></svg>
<svg style="position:absolute;left:833.90px;top:345.20px" width="13.20" height="13.20"><circle cx="6.60" cy="6.60" r="5.20" fill="#5ea96d" stroke="#2f6339" stroke-width="0.9"/></svg>
<svg style="position:absolute;left:833.90px;top:356.60px" width="13.20" height="13.20"><circle cx="6.60" cy="6.60" r="5.20" fill="#5ea96d" stroke="#2f6339" stroke-width="0.9"/></svg>
<div style="position:absolute;left:896.60px;top:357.00px;width:12.11px;height:11.50px;background:#a5e1f1;"></div>
<svg style="position:absolute;left:833.90px;top:368.00px" width="13.20" height="13.20"><circle cx="6.60" cy="6.60" r="5.20" fill="#5ea96d" stroke="#2f6339" stroke-width="0.9"/></svg>
<div style="position:absolute;left:896.60px;top:368.40px;width:12.48px;height:11.50px;background:#a5e1f1;"></div>
<svg style="position:absolute;left:833.90px;top:379.40px" width="13.20" height="13.20"><circle cx="6.60" cy="6.60" r="5.20" fill="#5ea96d" stroke="#2f6339" stroke-width="0.9"/></svg>
<div style="position:absolute;left:896.60px;top:379.80px;width:2.53px;height:11.50px;background:#a5e1f1;"></div>
<svg style="position:absolute;left:833.90px;top:390.80px" width="13.20" height="13.20"><circle cx="6.60" cy="6.60" r="5.20" fill="#5ea96d" stroke="#2f6339" stroke-width="0.9"/></svg>
<div style="position:absolute;left:896.60px;top:391.20px;width:4.57px;height:11.50px;background:#a5e1f1;"></div>
<svg style="position:absolute;left:833.90px;top:402.20px" width="13.20" height="13.20"><circle cx="6.60" cy="6.60" r="5.20" fill="#5ea96d" stroke="#2f6339" stroke-width="0.9"/></svg>
<div style="position:absolute;left:896.60px;top:402.60px;width:6.36px;height:11.50px;background:#a5e1f1;"></div>
<svg style="position:absolute;left:833.90px;top:413.60px" width="13.20" height="13.20"><circle cx="6.60" cy="6.60" r="5.20" fill="#5ea96d" stroke="#2f6339" stroke-width="0.9"/></svg>
<div style="position:absolute;left:896.60px;top:414.00px;width:1.67px;height:11.50px;background:#a5e1f1;"></div>
<svg style="position:absolute;left:833.90px;top:425.00px" width="13.20" height="13.20"><circle cx="6.60" cy="6.60" r="5.20" fill="#5ea96d" stroke="#2f6339" stroke-width="0.9"/></svg>
<div style="position:absolute;left:896.60px;top:425.40px;width:1.11px;height:11.50px;background:#a5e1f1;"></div>
<svg style="position:absolute;left:833.90px;top:436.40px" width="13.20" height="13.20"><circle cx="6.60" cy="6.60" r="5.20" fill="#5ea96d" stroke="#2f6339" stroke-width="0.9"/></svg>
<div style="position:absolute;left:896.60px;top:436.80px;width:0.62px;height:11.50px;background:#a5e1f1;"></div>
<svg style="position:absolute;left:833.90px;top:447.80px" width="13.20" height="13.20"><circle cx="6.60" cy="6.60" r="5.20" fill="#5ea96d" stroke="#2f6339" stroke-width="0.9"/></svg>
<div style="position:absolute;left:896.60px;top:448.20px;width:0.43px;height:11.50px;background:#a5e1f1;"></div>
<svg style="position:absolute;left:833.90px;top:459.20px" width="13.20" height="13.20"><circle cx="6.60" cy="6.60" r="5.20" fill="#5ea96d" stroke="#2f6339" stroke-width="0.9"/></svg>
<div style="position:absolute;left:896.60px;top:459.60px;width:0.37px;height:11.50px;background:#a5e1f1;"></div>
<svg style="position:absolute;left:833.90px;top:470.60px" width="13.20" height="13.20"><circle cx="6.60" cy="6.60" r="5.20" fill="#5ea96d" stroke="#2f6339" stroke-width="0.9"/></svg>
<div style="position:absolute;left:896.60px;top:471.00px;width:0.37px;height:11.50px;background:#a5e1f1;"></div>
<svg style="position:absolute;left:833.90px;top:482.00px" width="13.20" height="13.20"><circle cx="6.60" cy="6.60" r="5.20" fill="#5ea96d" stroke="#2f6339" stroke-width="0.9"/></svg>
<div style="position:absolute;left:896.60px;top:482.40px;width:0.31px;height:11.50px;background:#a5e1f1;"></div>
<svg style="position:absolute;left:833.90px;top:493.40px" width="13.20" height="13.20"><circle cx="6.60" cy="6.60" r="5.20" fill="#5ea96d" stroke="#2f6339" stroke-width="0.9"/></svg>
<div style="position:absolute;left:896.60px;top:493.80px;width:0.31px;height:11.50px;background:#a5e1f1;"></div>
<svg style="position:absolute;left:833.90px;top:504.80px" width="13.20" height="13.20"><circle cx="6.60" cy="6.60" r="5.20" fill="#5ea96d" stroke="#2f6339" stroke-width="0.9"/></svg>
<div style="position:absolute;left:896.60px;top:505.20px;width:0.31px;height:11.50px;background:#a5e1f1;"></div>
<svg style="position:absolute;left:833.90px;top:516.20px" width="13.20" height="13.20"><circle cx="6.60" cy="6.60" r="5.20" fill="#5ea96d" stroke="#2f6339" stroke-width="0.9"/></svg>
<div style="position:absolute;left:896.60px;top:516.60px;width:0.31px;height:11.50px;background:#a5e1f1;"></div>
<svg style="position:absolute;left:833.90px;top:527.60px" width="13.20" height="13.20"><circle cx="6.60" cy="6.60" r="5.20" fill="#5ea96d" stroke="#2f6339" stroke-width="0.9"/></svg>
<div style="position:absolute;left:896.60px;top:528.00px;width:0.31px;height:11.50px;background:#a5e1f1;"></div>
<svg style="position:absolute;left:833.90px;top:539.00px" width="13.20" height="13.20"><circle cx="6.60" cy="6.60" r="5.20" fill="#5ea96d" stroke="#2f6339" stroke-width="0.9"/></svg>
<div style="position:absolute;left:896.60px;top:539.40px;width:0.93px;height:11.50px;background:#a5e1f1;"></div>
<div class="t" style="left:589.00px;top:200.03px;font-size:8.6px;line-height:8.6px;color:#666666;transform:scaleX(0.9200);transform-origin:left center;">Sammie-Kellby Pirie Hatch mart</div>
<div class="t" style="right:250.20px;top:200.03px;font-size:8.6px;line-height:8.6px;color:#666666;transform:scaleX(0.8750);transform-origin:right center;">100.00%</div>
<div class="t" style="right:90.10px;top:200.03px;font-size:8.6px;line-height:8.6px;color:#666666;transform:scaleX(0.9100);transform-origin:right center;">2</div>
<div class="t" style="left:589.00px;top:211.43px;font-size:8.6px;line-height:8.6px;color:#666666;transform:scaleX(0.9200);transform-origin:left center;">Sanford-Purdy Eldrid Shrubrews</div>
<div class="t" style="right:250.20px;top:211.43px;font-size:8.6px;line-height:8.6px;color:#666666;transform:scaleX(0.8750);transform-origin:right center;">100.00%</div>
<div class="t" style="right:90.10px;top:211.43px;font-size:8.6px;line-height:8.6px;color:#666666;transform:scaleX(0.9100);transform-origin:right center;">25</div>
<div class="t" style="left:589.00px;top:222.83px;font-size:8.6px;line-height:8.6px;color:#666666;transform:scaleX(0.9200);transform-origin:left center;">Sanford-Purdy Heindrich Fjord Electronics</div>
<div class="t" style="right:250.20px;top:222.83px;font-size:8.6px;line-height:8.6px;color:#666666;transform:scaleX(0.8750);transform-origin:right center;">100.00%</div>
<div class="t" style="right:90.10px;top:222.83px;font-size:8.6px;line-height:8.6px;color:#666666;transform:scaleX(0.9100);transform-origin:right center;">2</div>
<div class="t" style="left:589.00px;top:234.23px;font-size:8.6px;line-height:8.6px;color:#666666;transform:scaleX(0.9200);transform-origin:left center;">Shields LLC Blanch Night ware</div>
<div class="t" style="right:250.20px;top:234.23px;font-size:8.6px;line-height:8.6px;color:#666666;transform:scaleX(0.8750);transform-origin:right center;">100.00%</div>
<div class="t" style="right:90.10px;top:234.23px;font-size:8.6px;line-height:8.6px;color:#666666;transform:scaleX(0.9100);transform-origin:right center;">1</div>
<div class="t" style="left:589.00px;top:245.63px;font-size:8.6px;line-height:8.6px;color:#666666;transform:scaleX(0.9200);transform-origin:left center;">Smith, Langosh and Reinger Woollin Dream mobile</div>
<div class="t" style="right:250.20px;top:245.63px;font-size:8.6px;line-height:8.6px;color:#666666;transform:scaleX(0.8750);transform-origin:right center;">100.00%</div>
<div class="t" style="right:90.10px;top:245.63px;font-size:8.6px;line-height:8.6px;color:#666666;transform:scaleX(0.9100);transform-origin:right center;">2</div>
<div class="t" style="left:589.00px;top:257.03px;font-size:8.6px;line-height:8.6px;color:#666666;transform:scaleX(0.9200);transform-origin:left center;">Stark-Windler Boden Hero Foods</div>
<div class="t" style="right:250.20px;top:257.03px;font-size:8.6px;line-height:8.6px;color:#666666;transform:scaleX(0.8750);transform-origin:right center;">100.00%</div>
<div class="t" style="right:90.10px;top:257.03px;font-size:8.6px;line-height:8.6px;color:#666666;transform:scaleX(0.9100);transform-origin:right center;">1</div>
<div class="t" style="left:589.00px;top:268.43px;font-size:8.6px;line-height:8.6px;color:#666666;transform:scaleX(0.9200);transform-origin:left center;">Stiedemann, Littel and Hintz Tetther Smart ways</div>
<div class="t" style="right:250.20px;top:268.43px;font-size:8.6px;line-height:8.6px;color:#666666;transform:scaleX(0.8750);transform-origin:right center;">100.00%</div>
<div class="t" style="right:90.10px;top:268.43px;font-size:8.6px;line-height:8.6px;color:#666666;transform:scaleX(0.9100);transform-origin:right center;">20</div>
<div class="t" style="left:589.00px;top:279.83px;font-size:8.6px;line-height:8.6px;color:#666666;transform:scaleX(0.9200);transform-origin:left center;">Teddy&amp;Kiel Mulvagh Bridge gold</div>
<div class="t" style="right:250.20px;top:279.83px;font-size:8.6px;line-height:8.6px;color:#666666;transform:scaleX(0.8750);transform-origin:right center;">100.00%</div>
<div class="t" style="right:90.10px;top:279.83px;font-size:8.6px;line-height:8.6px;color:#666666;transform:scaleX(0.9100);transform-origin:right center;">615</div>
<div class="t" style="left:589.00px;top:291.23px;font-size:8.6px;line-height:8.6px;color:#666666;transform:scaleX(0.9200);transform-origin:left center;">Thoughtbridge McBeath Ansoft</div>
<div class="t" style="right:250.20px;top:291.23px;font-size:8.6px;line-height:8.6px;color:#666666;transform:scaleX(0.8750);transform-origin:right center;">100.00%</div>
<div class="t" style="right:90.10px;top:291.23px;font-size:8.6px;line-height:8.6px;color:#666666;transform:scaleX(0.9100);transform-origin:right center;">9</div>
<div class="t" style="left:589.00px;top:302.63px;font-size:8.6px;line-height:8.6px;color:#666666;transform:scaleX(0.9200);transform-origin:left center;">Thoughtstorm Mallalieu Lion poly</div>
<div class="t" style="right:250.20px;top:302.63px;font-size:8.6px;line-height:8.6px;color:#666666;transform:scaleX(0.8750);transform-origin:right center;">100.00%</div>
<div class="t" style="right:90.10px;top:302.63px;font-size:8.6px;line-height:8.6px;color:#666666;transform:scaleX(0.9100);transform-origin:right center;">1</div>
<div class="t" style="left:589.00px;top:314.03px;font-size:8.6px;line-height:8.6px;color:#666666;transform:scaleX(0.9200);transform-origin:left center;">Wixey and Cisar Dungey Spideradio</div>
<div class="t" style="right:250.20px;top:314.03px;font-size:8.6px;line-height:8.6px;color:#666666;transform:scaleX(0.8750);transform-origin:right center;">100.00%</div>
<div class="t" style="right:90.10px;top:314.03px;font-size:8.6px;line-height:8.6px;color:#666666;transform:scaleX(0.9100);transform-origin:right center;">10</div>
<div class="t" style="left:589.00px;top:325.43px;font-size:8.6px;line-height:8.6px;color:#666666;transform:scaleX(0.9200);transform-origin:left center;">Yakunikov &amp; Tidswell Nesby Beteriss Gnomelectrics</div>
<div class="t" style="right:250.20px;top:325.43px;font-size:8.6px;line-height:8.6px;color:#666666;transform:scaleX(0.8750);transform-origin:right center;">100.00%</div>
<div class="t" style="right:90.10px;top:325.43px;font-size:8.6px;line-height:8.6px;color:#666666;transform:scaleX(0.9100);transform-origin:right center;">1</div>
<div class="t" style="left:589.00px;top:336.83px;font-size:8.6px;line-height:8.6px;color:#666666;transform:scaleX(0.9200);transform-origin:left center;">Zolly-Rhett ConkayThames Dream Intelligence</div>
<div class="t" style="right:250.20px;top:336.83px;font-size:8.6px;line-height:8.6px;color:#666666;transform:scaleX(0.8750);transform-origin:right center;">100.00%</div>
<div class="t" style="right:90.10px;top:336.83px;font-size:8.6px;line-height:8.6px;color:#666666;transform:scaleX(0.9100);transform-origin:right center;">2</div>
<div class="t" style="left:589.00px;top:348.23px;font-size:8.6px;line-height:8.6px;color:#666666;transform:scaleX(0.9200);transform-origin:left center;">Zoomdog Stubbings Riverecords</div>
<div class="t" style="right:250.20px;top:348.23px;font-size:8.6px;line-height:8.6px;color:#666666;transform:scaleX(0.8750);transform-origin:right center;">100.00%</div>
<div class="t" style="right:90.10px;top:348.23px;font-size:8.6px;line-height:8.6px;color:#666666;transform:scaleX(0.9100);transform-origin:right center;">3</div>
<div class="t" style="left:589.00px;top:359.63px;font-size:8.6px;line-height:8.6px;color:#666666;transform:scaleX(0.9200);transform-origin:left center;">Matthias and Matthias Tidswell Icebergarts</div>
<div class="t" style="right:250.20px;top:359.63px;font-size:8.6px;line-height:8.6px;color:#666666;transform:scaleX(0.8750);transform-origin:right center;">99.49%</div>
<div class="t" style="right:90.10px;top:359.63px;font-size:8.6px;line-height:8.6px;color:#666666;transform:scaleX(0.9100);transform-origin:right center;">196</div>
<div class="t" style="left:589.00px;top:371.03px;font-size:8.6px;line-height:8.6px;color:#666666;transform:scaleX(0.9200);transform-origin:left center;">Feil LLC Aveline Banshee ex</div>
<div class="t" style="right:250.20px;top:371.03px;font-size:8.6px;line-height:8.6px;color:#666666;transform:scaleX(0.8750);transform-origin:right center;">99.01%</div>
<div class="t" style="right:90.10px;top:371.03px;font-size:8.6px;line-height:8.6px;color:#666666;transform:scaleX(0.9100);transform-origin:right center;">202</div>
<div class="t" style="left:589.00px;top:382.43px;font-size:8.6px;line-height:8.6px;color:#666666;transform:scaleX(0.9200);transform-origin:left center;">Adams Arnatt Vasilkov Cliff cast</div>
<div class="t" style="right:250.20px;top:382.43px;font-size:8.6px;line-height:8.6px;color:#666666;transform:scaleX(0.8750);transform-origin:right center;">97.56%</div>
<div class="t" style="right:90.10px;top:382.43px;font-size:8.6px;line-height:8.6px;color:#666666;transform:scaleX(0.9100);transform-origin:right center;">41</div>
<div class="t" style="left:589.00px;top:393.83px;font-size:8.6px;line-height:8.6px;color:#666666;transform:scaleX(0.9200);transform-origin:left center;">Bernhard, Schuster and D'Amore Dumbrall Explority</div>
<div class="t" style="right:250.20px;top:393.83px;font-size:8.6px;line-height:8.6px;color:#666666;transform:scaleX(0.8750);transform-origin:right center;">97.30%</div>
<div class="t" style="right:90.10px;top:393.83px;font-size:8.6px;line-height:8.6px;color:#666666;transform:scaleX(0.9100);transform-origin:right center;">74</div>
<div class="t" style="left:589.00px;top:405.23px;font-size:8.6px;line-height:8.6px;color:#666666;transform:scaleX(0.9200);transform-origin:left center;">Buttress and Buttress Cobbold Bridgelectrics</div>
<div class="t" style="right:250.20px;top:405.23px;font-size:8.6px;line-height:8.6px;color:#666666;transform:scaleX(0.8750);transform-origin:right center;">97.09%</div>
<div class="t" style="right:90.10px;top:405.23px;font-size:8.6px;line-height:8.6px;color:#666666;transform:scaleX(0.9100);transform-origin:right center;">103</div>
<div class="t" style="left:589.00px;top:416.63px;font-size:8.6px;line-height:8.6px;color:#666666;transform:scaleX(0.9200);transform-origin:left center;">Kiley-Schuyler Fitzjohn Monarch Coms</div>
<div class="t" style="right:250.20px;top:416.63px;font-size:8.6px;line-height:8.6px;color:#666666;transform:scaleX(0.8750);transform-origin:right center;">96.30%</div>
<div class="t" style="right:90.10px;top:416.63px;font-size:8.6px;line-height:8.6px;color:#666666;transform:scaleX(0.9100);transform-origin:right center;">27</div>
<div class="t" style="left:589.00px;top:428.03px;font-size:8.6px;line-height:8.6px;color:#666666;transform:scaleX(0.9200);transform-origin:left center;">Stanton, Greenfelder and Nitzsche Calverley Hercules Foods</div>
<div class="t" style="right:250.20px;top:428.03px;font-size:8.6px;line-height:8.6px;color:#666666;transform:scaleX(0.8750);transform-origin:right center;">94.44%</div>
<div class="t" style="right:90.10px;top:428.03px;font-size:8.6px;line-height:8.6px;color:#666666;transform:scaleX(0.9100);transform-origin:right center;">18</div>
<div class="t" style="left:589.00px;top:439.43px;font-size:8.6px;line-height:8.6px;color:#666666;transform:scaleX(0.9200);transform-origin:left center;">Hartmann-Stoltenberg Harbor Padlockurity</div>
<div class="t" style="right:250.20px;top:439.43px;font-size:8.6px;line-height:8.6px;color:#666666;transform:scaleX(0.8750);transform-origin:right center;">90.00%</div>
<div class="t" style="right:90.10px;top:439.43px;font-size:8.6px;line-height:8.6px;color:#666666;transform:scaleX(0.9100);transform-origin:right center;">10</div>
<div class="t" style="left:589.00px;top:450.83px;font-size:8.6px;line-height:8.6px;color:#666666;transform:scaleX(0.9200);transform-origin:left center;">Treutel-Heaney McEneny Dwarf stones</div>
<div class="t" style="right:250.20px;top:450.83px;font-size:8.6px;line-height:8.6px;color:#666666;transform:scaleX(0.8750);transform-origin:right center;">85.71%</div>
<div class="t" style="right:90.10px;top:450.83px;font-size:8.6px;line-height:8.6px;color:#666666;transform:scaleX(0.9100);transform-origin:right center;">7</div>
<div class="t" style="left:589.00px;top:462.23px;font-size:8.6px;line-height:8.6px;color:#666666;transform:scaleX(0.9200);transform-origin:left center;">Andrea Gavriel Prestner Whizystems</div>
<div class="t" style="right:250.20px;top:462.23px;font-size:8.6px;line-height:8.6px;color:#666666;transform:scaleX(0.8750);transform-origin:right center;">83.33%</div>
<div class="t" style="right:90.10px;top:462.23px;font-size:8.6px;line-height:8.6px;color:#666666;transform:scaleX(0.9100);transform-origin:right center;">6</div>
<div class="t" style="left:589.00px;top:473.63px;font-size:8.6px;line-height:8.6px;color:#666666;transform:scaleX(0.9200);transform-origin:left center;">Toiboid&amp;Chadd Armytage Desert gate</div>
<div class="t" style="right:250.20px;top:473.63px;font-size:8.6px;line-height:8.6px;color:#666666;transform:scaleX(0.8750);transform-origin:right center;">83.33%</div>
<div class="t" style="right:90.10px;top:473.63px;font-size:8.6px;line-height:8.6px;color:#666666;transform:scaleX(0.9100);transform-origin:right center;">6</div>
<div class="t" style="left:589.00px;top:485.03px;font-size:8.6px;line-height:8.6px;color:#666666;transform:scaleX(0.9200);transform-origin:left center;">Axel Heims Johanssen Omega coms</div>
<div class="t" style="right:250.20px;top:485.03px;font-size:8.6px;line-height:8.6px;color:#666666;transform:scaleX(0.8750);transform-origin:right center;">80.00%</div>
<div class="t" style="right:90.10px;top:485.03px;font-size:8.6px;line-height:8.6px;color:#666666;transform:scaleX(0.9100);transform-origin:right center;">5</div>
<div class="t" style="left:589.00px;top:496.43px;font-size:8.6px;line-height:8.6px;color:#666666;transform:scaleX(0.9200);transform-origin:left center;">Boehm-Jones Jarman Nimble bit</div>
<div class="t" style="right:250.20px;top:496.43px;font-size:8.6px;line-height:8.6px;color:#666666;transform:scaleX(0.8750);transform-origin:right center;">80.00%</div>
<div class="t" style="right:90.10px;top:496.43px;font-size:8.6px;line-height:8.6px;color:#666666;transform:scaleX(0.9100);transform-origin:right center;">5</div>
<div class="t" style="left:589.00px;top:507.83px;font-size:8.6px;line-height:8.6px;color:#666666;transform:scaleX(0.9200);transform-origin:left center;">Dalt&amp;Norry Caiger Ogreprises</div>
<div class="t" style="right:250.20px;top:507.83px;font-size:8.6px;line-height:8.6px;color:#666666;transform:scaleX(0.8750);transform-origin:right center;">80.00%</div>
<div class="t" style="right:90.10px;top:507.83px;font-size:8.6px;line-height:8.6px;color:#666666;transform:scaleX(0.9100);transform-origin:right center;">5</div>
<div class="t" style="left:589.00px;top:519.23px;font-size:8.6px;line-height:8.6px;color:#666666;transform:scaleX(0.9200);transform-origin:left center;">Flashpoint Daggett Amazon coms</div>
<div class="t" style="right:250.20px;top:519.23px;font-size:8.6px;line-height:8.6px;color:#666666;transform:scaleX(0.8750);transform-origin:right center;">80.00%</div>
<div class="t" style="right:90.10px;top:519.23px;font-size:8.6px;line-height:8.6px;color:#666666;transform:scaleX(0.9100);transform-origin:right center;">5</div>
<div class="t" style="left:589.00px;top:530.63px;font-size:8.6px;line-height:8.6px;color:#666666;transform:scaleX(0.9200);transform-origin:left center;">Meredeth&amp;Armand Sievewright Hatchworks</div>
<div class="t" style="right:250.20px;top:530.63px;font-size:8.6px;line-height:8.6px;color:#666666;transform:scaleX(0.8750);transform-origin:right center;">80.00%</div>
<div class="t" style="right:90.10px;top:530.63px;font-size:8.6px;line-height:8.6px;color:#666666;transform:scaleX(0.9100);transform-origin:right center;">5</div>
<div class="t" style="left:589.00px;top:542.03px;font-size:8.6px;line-height:8.6px;color:#666666;transform:scaleX(0.9200);transform-origin:left center;">Schumm, Borer and Bahringer Brummitt Ghostronics</div>
<div class="t" style="right:250.20px;top:542.03px;font-size:8.6px;line-height:8.6px;color:#666666;transform:scaleX(0.8750);transform-origin:right center;">80.00%</div>
<div class="t" style="right:90.10px;top:542.03px;font-size:8.6px;line-height:8.6px;color:#666666;transform:scaleX(0.9100);transform-origin:right center;">15</div>
<div style="position:absolute;left:896.10px;top:197.50px;width:0.90px;height:350.50px;background:#7a8a92;"></div>
</div></div>
</body></html>
